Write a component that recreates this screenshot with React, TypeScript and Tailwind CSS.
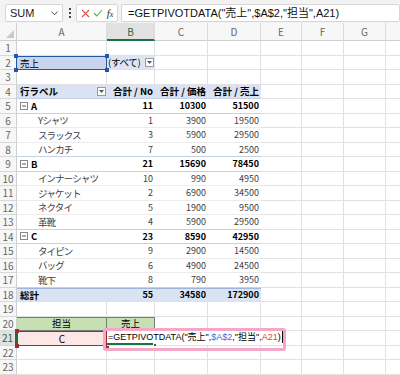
import React from "react";

const FONT = { fontFamily: '"Noto Sans CJK JP", "Noto Sans", sans-serif' };
const FORMULA_FONT = { fontFamily: '"Liberation Sans", "Noto Sans CJK JP", sans-serif' };

const W = ["w-[90px]", "w-[48px]", "w-[53px]", "w-[53px]", "w-[41px]", "w-[42px]", "w-[42px]", "w-[60px]"];
const LETTERS = ["A", "B", "C", "D", "E", "F", "G", ""];

function RowHead({ n, active }: { n: number; active?: boolean }) {
  return (
    <div
      className={
        "w-[17px] shrink-0 h-full flex items-center justify-center text-[10px] border-b border-[#d8d8d8] " +
        (active
          ? "bg-[#e1e1e1] text-[#1e6b41] border-r-2 border-r-[#1e7145]"
          : "bg-[#f7f7f7] text-[#666] border-r border-r-[#d0d0d0]")
      }
    >
      {n}
    </div>
  );
}

function Empty({ i }: { i: number }) {
  return <div className={W[i] + " shrink-0 h-full border-r border-b border-[#e1e1e1]"} />;
}

function EmptyFrom({ from }: { from: number }) {
  return (
    <>
      {LETTERS.map((_, i) => (i >= from ? <Empty key={i} i={i} /> : null))}
    </>
  );
}

function Row({ children }: { children: React.ReactNode }) {
  return <div className="flex h-[14.5px] shrink-0">{children}</div>;
}

type PRow = { label: string; v: [number, number, number]; kind: "parent" | "child" | "total"; last?: boolean };

const PIVOT: PRow[] = [
  { label: "A", v: [11, 10300, 51500], kind: "parent" },
  { label: "Yシャツ", v: [1, 3900, 19500], kind: "child" },
  { label: "スラックス", v: [3, 5900, 29500], kind: "child" },
  { label: "ハンカチ", v: [7, 500, 2500], kind: "child", last: true },
  { label: "B", v: [21, 15690, 78450], kind: "parent" },
  { label: "インナーシャツ", v: [10, 990, 4950], kind: "child" },
  { label: "ジャケット", v: [2, 6900, 34500], kind: "child" },
  { label: "ネクタイ", v: [5, 1900, 9500], kind: "child" },
  { label: "革靴", v: [4, 5900, 29500], kind: "child", last: true },
  { label: "C", v: [23, 8590, 42950], kind: "parent" },
  { label: "タイピン", v: [9, 2900, 14500], kind: "child" },
  { label: "バッグ", v: [6, 4900, 24500], kind: "child" },
  { label: "靴下", v: [8, 790, 3950], kind: "child", last: true },
  { label: "総計", v: [55, 34580, 172900], kind: "total" },
];

function DropBtn() {
  return (
    <div className="w-[9px] h-[9px] shrink-0 bg-white border border-[#9a9a9a] flex items-center justify-center">
      <svg width="5" height="3" viewBox="0 0 5 3">
        <path d="M0 0 L5 0 L2.5 3 Z" fill="#555" />
      </svg>
    </div>
  );
}

function MinusBox() {
  return (
    <svg width="8" height="8" viewBox="0 0 8 8" className="mr-[3px] shrink-0">
      <rect x="0.5" y="0.5" width="7" height="7" fill="white" stroke="#8a8a8a" />
      <line x1="2" y1="4" x2="6" y2="4" stroke="#555" />
    </svg>
  );
}

function PivotRow({ r, n }: { r: PRow; n: number }) {
  const bold = r.kind !== "child";
  const rowBorder =
    r.kind === "parent"
      ? "border-b border-[#c5d1e6]"
      : r.kind === "total"
      ? "border-t border-[#9fb5dc] border-b border-b-[#e1e1e1] bg-[#dae3f3]"
      : r.last
      ? "border-b border-[#c5d1e6]"
      : "border-b border-[#ececec]";
  const txt = bold ? "font-bold text-black" : "text-[#404040]";
  return (
    <Row>
      <RowHead n={n} />
      <div className={"flex h-full " + rowBorder}>
        <div
          className={
            W[0] +
            " shrink-0 h-full flex items-center whitespace-nowrap overflow-hidden " +
            txt +
            (r.kind === "child" ? " pl-[21px] text-[9.5px] tracking-[-0.9px]" : " pl-[3px] text-[9.5px]")
          }
        >
          {r.kind === "parent" && <MinusBox />}
          {r.label}
        </div>
        {r.v.map((x, i) => (
          <div
            key={i}
            className={W[i + 1] + " shrink-0 h-full flex items-center justify-end pr-[2px] text-[9px] whitespace-nowrap " + txt}
          >
            {x}
          </div>
        ))}
      </div>
      <EmptyFrom from={4} />
    </Row>
  );
}

export default function App() {
  return (
    <div className="w-[400px] h-[375px] overflow-hidden bg-white relative flex flex-col" style={FONT}>
      {/* formula bar */}
      <div className="h-[23px] shrink-0 bg-[#f3f3f3] flex items-start pt-[4px] pl-[5px]">
        <div className="w-[58px] h-[18px] bg-white border border-[#d6d6d6] rounded-[2px] flex items-center justify-between px-[4px]">
          <span className="text-[11px] text-[#222]" style={{ fontFamily: '"Liberation Sans", sans-serif' }}>SUM</span>
          <svg width="7" height="5" viewBox="0 0 7 5">
            <path d="M0.5 0.5 L3.5 3.8 L6.5 0.5" fill="none" stroke="#555" strokeWidth="1" />
          </svg>
        </div>
        <div className="w-[13px] h-[18px] flex flex-col items-center justify-center gap-[2px]">
          <div className="w-[2px] h-[2px] bg-[#444]" />
          <div className="w-[2px] h-[2px] bg-[#444]" />
          <div className="w-[2px] h-[2px] bg-[#444]" />
        </div>
        <div className="w-[42px] h-[18px] bg-white border border-[#d6d6d6] rounded-[2px] flex items-center justify-around px-[2px]">
          <svg width="9" height="9" viewBox="0 0 9 9">
            <path d="M1 1 L8 8 M8 1 L1 8" stroke="#d9534f" strokeWidth="1.1" />
          </svg>
          <svg width="10" height="8" viewBox="0 0 10 8">
            <path d="M1 4 L3.8 7 L9 1" fill="none" stroke="#4caf50" strokeWidth="1.1" />
          </svg>
          <span className="text-[11px] italic text-[#333]" style={{ fontFamily: '"Liberation Serif", serif' }}>
            f<span className="text-[8px]">x</span>
          </span>
        </div>
        <div className="ml-[3px] flex-1 h-[18px] bg-white border border-[#d6d6d6] rounded-[2px] flex items-center pl-[6px]">
          <span className="text-[11px] text-[#111] whitespace-nowrap" style={FORMULA_FONT}>
            =GETPIVOTDATA("売上",$A$2,"担当",A21)
          </span>
        </div>
      </div>

      {/* column header */}
      <div className="flex h-[18px] shrink-0 bg-[#f7f7f7]">
        <div className="w-[17px] shrink-0 h-full border-r border-b border-[#d0d0d0] relative">
          <svg width="8" height="8" viewBox="0 0 8 8" className="absolute right-[2px] bottom-[2px]">
            <path d="M8 0 L8 8 L0 8 Z" fill="#c8c8c8" />
          </svg>
        </div>
        {LETTERS.map((l, i) => (
          <div
            key={i}
            className={
              W[i] +
              " shrink-0 h-full flex items-center justify-center text-[10px] border-r border-r-[#dcdcdc] " +
              (i === 1 ? "bg-[#e1e1e1] text-[#1e6b41] border-b-2 border-b-[#1e7145]" : "text-[#666] border-b border-b-[#d0d0d0]")
            }
          >
            {l}
          </div>
        ))}
      </div>

      {/* row 1 */}
      <Row>
        <RowHead n={1} />
        <EmptyFrom from={0} />
      </Row>
      {/* row 2 */}
      <Row>
        <RowHead n={2} />
        <div className={W[0] + " shrink-0 h-full relative bg-[#c9d5ee] flex items-center pl-[3px] text-[9.5px] text-black whitespace-nowrap"}>
          売上
          <div className="absolute inset-0 -left-[1px] border-[1.5px] border-[#2456a6] pointer-events-none" />
          <div className="absolute -left-[3px] -top-[2px] w-[4px] h-[4px] bg-[#2456a6]" />
          <div className="absolute -right-[2px] -top-[2px] w-[4px] h-[4px] bg-[#2456a6]" />
          <div className="absolute -left-[3px] -bottom-[2px] w-[4px] h-[4px] bg-[#2456a6]" />
          <div className="absolute -right-[2px] -bottom-[2px] w-[4px] h-[4px] bg-[#2456a6]" />
        </div>
        <div className={W[1] + " shrink-0 h-full bg-[#dde5f4] flex items-center justify-between pl-[1px] pr-[1px] text-[9.5px] text-black border-b border-[#e1e1e1] whitespace-nowrap"}>
          <span className="tracking-[-0.3px]">(すべて)</span>
          <DropBtn />
        </div>
        <EmptyFrom from={2} />
      </Row>
      {/* row 3 */}
      <Row>
        <RowHead n={3} />
        <EmptyFrom from={0} />
      </Row>
      {/* row 4 header */}
      <Row>
        <RowHead n={4} />
        <div className="flex h-full bg-[#dae3f3] border-b border-[#c5d1e6]">
          <div className={W[0] + " shrink-0 h-full flex items-center justify-between pl-[3px] pr-[1px] text-[9.5px] font-bold text-black whitespace-nowrap"}>
            <span>行ラベル</span>
            <DropBtn />
          </div>
          {["合計 / No", "合計 / 価格", "合計 / 売上"].map((t, i) => (
            <div key={t} className={W[i + 1] + " shrink-0 h-full flex items-center justify-end pr-[2px] text-[9.5px] font-bold text-black whitespace-nowrap"}>
              {t}
            </div>
          ))}
        </div>
        <EmptyFrom from={4} />
      </Row>
      {PIVOT.map((r, i) => (
        <PivotRow key={r.label} r={r} n={5 + i} />
      ))}
      {/* row 19 */}
      <Row>
        <RowHead n={19} />
        <EmptyFrom from={0} />
      </Row>
      {/* row 20 */}
      <Row>
        <RowHead n={20} />
        <div className={W[0] + " shrink-0 h-full bg-[#c6e0b4] border-t border-b border-r border-[#7a7a7a] flex items-center justify-center text-[9.5px] text-black whitespace-nowrap"}>
          <span className="-mt-[1px]">担当</span>
        </div>
        <div className={W[1] + " shrink-0 h-full bg-[#c6e0b4] border-t border-b border-r border-[#7a7a7a] flex items-center justify-center text-[9.5px] text-black whitespace-nowrap"}>
          <span className="-mt-[1px]">売上</span>
        </div>
        <EmptyFrom from={2} />
      </Row>
      {/* row 21 */}
      <Row>
        <RowHead n={21} active />
        <div className={W[0] + " shrink-0 h-full bg-[#fce6e6] relative flex items-center justify-center text-[10px] text-black"}>
          C
          <div className="absolute inset-0 border-[1.5px] border-[#9c2b2b]" />
          <div className="absolute -left-[2px] -top-[2px] w-[4px] h-[4px] bg-[#9c2b2b]" />
          <div className="absolute -right-[2px] -top-[2px] w-[4px] h-[4px] bg-[#9c2b2b]" />
          <div className="absolute -left-[2px] -bottom-[2px] w-[4px] h-[4px] bg-[#9c2b2b]" />
          <div className="absolute -right-[2px] -bottom-[2px] w-[4px] h-[4px] bg-[#9c2b2b]" />
        </div>
        <div className="w-[195px] shrink-0 h-full relative border-r border-b border-[#e1e1e1] bg-white">
          <div className="absolute left-0 top-0 w-[48px] h-full border-b-2 border-[#1e7145]" />
          <div className="absolute left-[46px] -bottom-[2px] w-[4px] h-[4px] bg-[#1e7145] border border-white" />
          <div className="absolute left-[1px] inset-y-0 -mt-[1px] flex items-center">
            <span className="text-[9px] text-black whitespace-nowrap" style={FORMULA_FONT}>
              =GETPIVOTDATA("売上",<span className="text-[#3a6fd8]">$A$2</span>,"担当",<span className="text-[#d9473f]">A21</span>)
            </span>
            <span className="ml-[1px] w-[1px] h-[12px] bg-black" />
          </div>
        </div>
        <EmptyFrom from={5} />
      </Row>
      <Row>
        <RowHead n={22} />
        <EmptyFrom from={0} />
      </Row>
      <Row>
        <RowHead n={23} />
        <EmptyFrom from={0} />
      </Row>

      {/* annotation */}
      <div className="absolute left-[103px] top-[328px] w-[183px] h-[23px] border-[3px] border-[#f4a7c7] rounded-[3px] pointer-events-none" />
    </div>
  );
}
